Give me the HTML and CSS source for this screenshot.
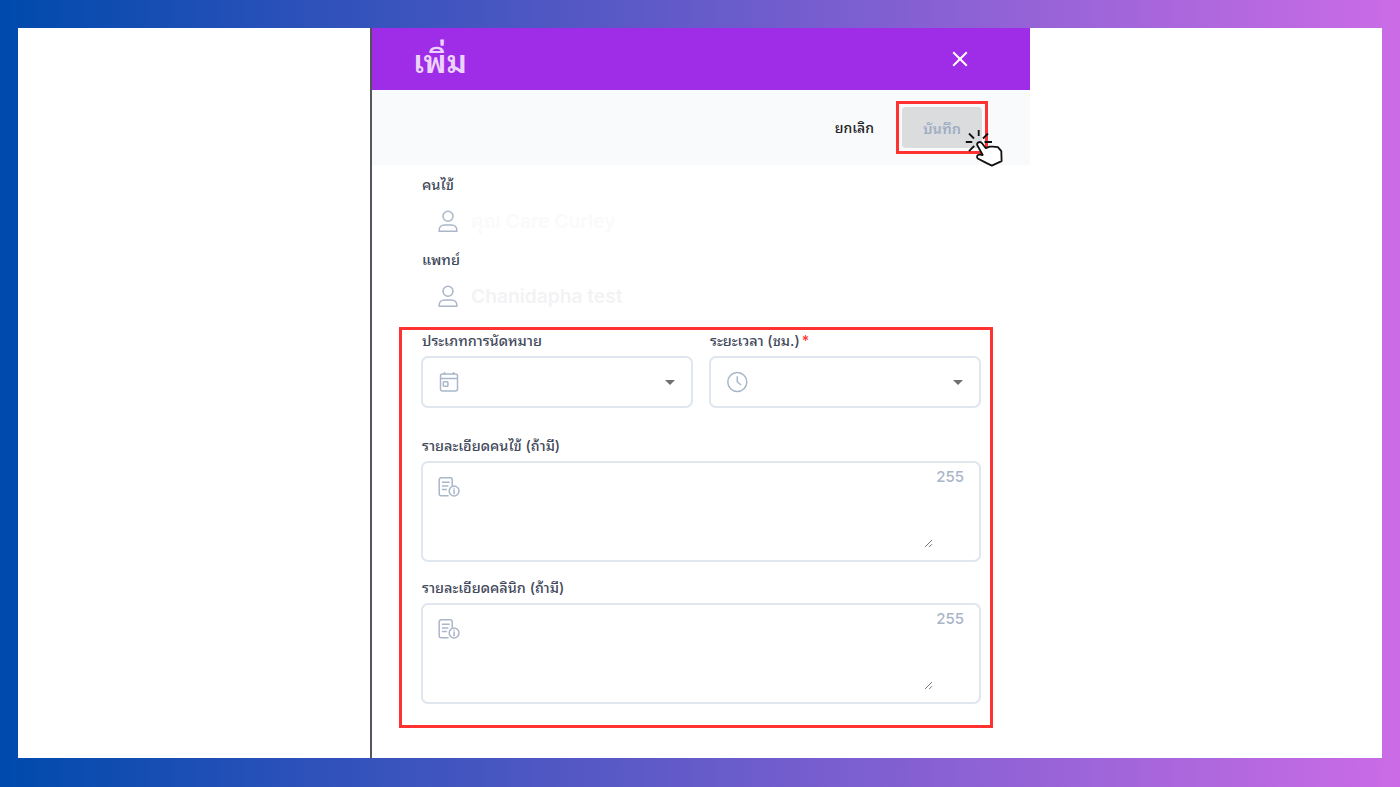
FILE: index.html
```html
<!DOCTYPE html>
<html lang="th">
<head>
  <meta charset="UTF-8">
  <meta name="viewport" content="width=device-width, initial-scale=1.0">
  <title>เพิ่ม</title>
  <link rel="stylesheet" href="styles.css">
</head>
<body>

  <div class="page">
    <div class="panel">
      <!-- Header -->
      <div class="panel-header">
        <h1>เพิ่ม</h1>
        <svg class="close-icon" width="16" height="16" viewBox="0 0 16 16">
          <path d="M1.2 1.2l13.6 13.6M14.8 1.2L1.2 14.8"/>
        </svg>
      </div>

      <!-- Cancel / save -->
      <div class="toolbar">
        <span class="cancel-btn">ยกเลิก</span>
        <div class="save-highlight">
          <span class="save-btn">บันทึก</span>
          <svg class="pointer" width="40" height="40" viewBox="0 0 40 40">
            <path class="rays" d="M13.7 1v6M4 4.5l5 5M23 4.5l-5 5M.8 13h6.4M19.5 13H27M4 22.2l5.2-5.2"/>
            <path class="hand" d="M12.3 16.3c-.9-2.4 2.4-4.7 4.7-2.1l3.8 5 4-1.5 3.1-.1 5 .5 3.4 4 .3 10-9.8 4.5-6.1-3-8-4.1c-1.5-1.6-.5-4 2-3.9l3 .4z"/>
          </svg>
        </div>
      </div>

      <!-- Patient and doctor -->
      <div class="people">
        <label class="label">คนไข้</label>
        <div class="person">
          <svg class="icon" width="22" height="24" viewBox="0 0 22 24">
            <circle cx="11" cy="7.3" r="5"/>
            <path d="M2.2 22.3v-1.4c0-3 2.3-5 5.3-5h7c3 0 5.3 2 5.3 5v1.4z"/>
          </svg>
          <span class="person-name faint">คุณ Care Curley</span>
        </div>
        <label class="label">แพทย์</label>
        <div class="person">
          <svg class="icon" width="22" height="24" viewBox="0 0 22 24">
            <circle cx="11" cy="7.3" r="5"/>
            <path d="M2.2 22.3v-1.4c0-3 2.3-5 5.3-5h7c3 0 5.3 2 5.3 5v1.4z"/>
          </svg>
          <span class="person-name">Chanidapha test</span>
        </div>
      </div>

      <!-- Appointment details -->
      <div class="details">
        <div class="row">
          <div class="field">
            <label class="label">ประเภทการนัดหมาย</label>
            <div class="select-box">
              <svg class="icon" width="22" height="22" viewBox="0 0 22 22">
                <rect x="1.5" y="3" width="17" height="17" rx="2"/>
                <path d="M1.5 7.5h17M5.5 1v3M14.5 1v3"/>
                <rect x="4.3" y="10.7" width="4.6" height="4.6" rx=".8"/>
              </svg>
              <span class="arrow"></span>
            </div>
          </div>
          <div class="field">
            <label class="label">ระยะเวลา (ชม.)<span class="required">*</span></label>
            <div class="select-box">
              <svg class="icon" width="22" height="22" viewBox="0 0 22 22">
                <circle cx="10.3" cy="11" r="9.5"/>
                <path d="M10.3 5.3V11l3.9 3"/>
              </svg>
              <span class="arrow"></span>
            </div>
          </div>
        </div>

        <div class="field">
          <label class="label">รายละเอียดคนไข้ (ถ้ามี)</label>
          <div class="text-box">
            <svg class="icon" width="23" height="22" viewBox="0 0 23 22">
              <path d="M10.6 18.8H3.2a2 2 0 0 1-2-2v-14a2 2 0 0 1 2-2h9a2 2 0 0 1 2 2v6M3.9 5.3h7.8M3.9 9h6.5M3.9 12.5h5"/>
              <circle cx="16.1" cy="14" r="4.9"/>
              <path d="M16.1 10.8v1M16.1 12.4v4.9"/>
            </svg>
            <div class="text-side">
              <span class="count">255</span>
              <svg class="grip" width="9" height="9" viewBox="0 0 9 9"><path d="M1 8l7-7M5.2 8L8 5.2"/></svg>
            </div>
          </div>
        </div>

        <div class="field">
          <label class="label">รายละเอียดคลินิก (ถ้ามี)</label>
          <div class="text-box">
            <svg class="icon" width="23" height="22" viewBox="0 0 23 22">
              <path d="M10.6 18.8H3.2a2 2 0 0 1-2-2v-14a2 2 0 0 1 2-2h9a2 2 0 0 1 2 2v6M3.9 5.3h7.8M3.9 9h6.5M3.9 12.5h5"/>
              <circle cx="16.1" cy="14" r="4.9"/>
              <path d="M16.1 10.8v1M16.1 12.4v4.9"/>
            </svg>
            <div class="text-side">
              <span class="count">255</span>
              <svg class="grip" width="9" height="9" viewBox="0 0 9 9"><path d="M1 8l7-7M5.2 8L8 5.2"/></svg>
            </div>
          </div>
        </div>
      </div>
    </div>
  </div>

</body>
</html>
```
FILE: styles.css
```css
* {
  box-sizing: border-box;
}

body {
  margin: 0;
  font-family: Inter, "Noto Sans Thai Looped", Loma, Garuda, Waree, "Noto Sans", sans-serif;
  background: linear-gradient(90deg, #004aad, #cb6ce6);
}

.page {
  height: 787px;
  padding: 28px 18px 29px;
}

/* left edge of the drawer runs the full height */
.panel {
  height: 730px;
  padding: 0 352px;
  background: #fff linear-gradient(#54575d, #54575d) 352px 0 / 2px 100% no-repeat;
}

.panel-header {
  display: flex;
  justify-content: space-between;
  align-items: center;
  height: 62px;
  padding: 0 62px 0 41px;
  background-color: #9f2ce7;
  border-left: 2px solid #54505c;
}

.panel-header h1 {
  margin: 0;
  padding-top: 6px;
  font-size: 31.5px;
  font-weight: 600;
  line-height: 56px;
  color: #ecd3fb;
}

.close-icon {
  fill: none;
  stroke: #fff;
  stroke-width: 2;
}

.toolbar {
  display: flex;
  justify-content: flex-end;
  align-items: center;
  gap: 22px;
  height: 75px;
  padding-right: 42px;
  background-color: #f8fafc;
  border-left: 2px solid #54575d;
}

.cancel-btn {
  padding-bottom: 2px;
  font-size: 14px;
  font-weight: 500;
  color: #222;
}

.save-highlight {
  position: relative;
  width: 92px;
  height: 53px;
  padding: 3px;
  border: 3px solid #ff3131;
}

.save-btn {
  display: block;
  height: 41px;
  border-radius: 4px;
  background-color: #dadcde;
  color: #9fadc3;
  font-size: 14.5px;
  font-weight: 600;
  line-height: 43px;
  text-align: center;
}

.pointer {
  position: absolute;
  left: 66px;
  top: 25px;
  fill: none;
  stroke: #111;
  stroke-width: 1.8;
}

.pointer .hand {
  fill: #fff;
  stroke-linejoin: round;
}

.label {
  display: block;
  height: 24px;
  padding-left: 1px;
  font-size: 14.5px;
  font-weight: 500;
  line-height: 23px;
  color: #3f495a;
  white-space: nowrap;
}

.people {
  height: 162px;
  padding: 8px 0 0 49px;
  border-left: 2px solid #54575d;
}

.person {
  display: flex;
  align-items: center;
  gap: 12px;
  height: 51px;
  padding: 0 0 3px 16px;
}

.icon {
  flex: none;
  fill: none;
  stroke: #aab6c9;
  stroke-width: 1.5;
}

.person-name {
  font-size: 19.2px;
  font-weight: 600;
  line-height: 24px;
  color: #f2f3f4;
}

.person-name.faint {
  color: #fafafa;
}

.details {
  width: 594px;
  height: 401px;
  margin-left: 29px;
  padding: 0 9px 0 19px;
  border: 3px solid #ff3131;
}

.row {
  display: flex;
  gap: 16px;
  margin-bottom: 27px;
}

.row .field {
  flex: 1;
}

.details .label {
  font-size: 14.4px;
  line-height: 22px;
}

.row .label {
  height: 26px;
}

.required {
  margin-left: 2px;
  color: #f33;
}

.select-box {
  display: flex;
  align-items: center;
  justify-content: space-between;
  height: 52px;
  padding: 0 16px;
  border: 2px solid #e0e6ee;
  border-radius: 7px;
}

.arrow {
  border: 5px solid transparent;
  border-top-color: #6f6f6f;
  border-bottom: 0;
}

.text-box {
  display: flex;
  justify-content: space-between;
  height: 101px;
  margin: 2px 0 15px;
  padding: 14px 15px 12px;
  border: 2px solid #e0e6ee;
  border-radius: 7px;
}

.text-side {
  display: flex;
  flex-direction: column;
  justify-content: space-between;
  margin-top: -9px;
}

.count {
  font-size: 15px;
  font-weight: 500;
  line-height: 18px;
  color: #a9b5c9;
}

.grip {
  margin-left: -12px;
  fill: none;
  stroke: #777;
  stroke-width: 1;
}
```
